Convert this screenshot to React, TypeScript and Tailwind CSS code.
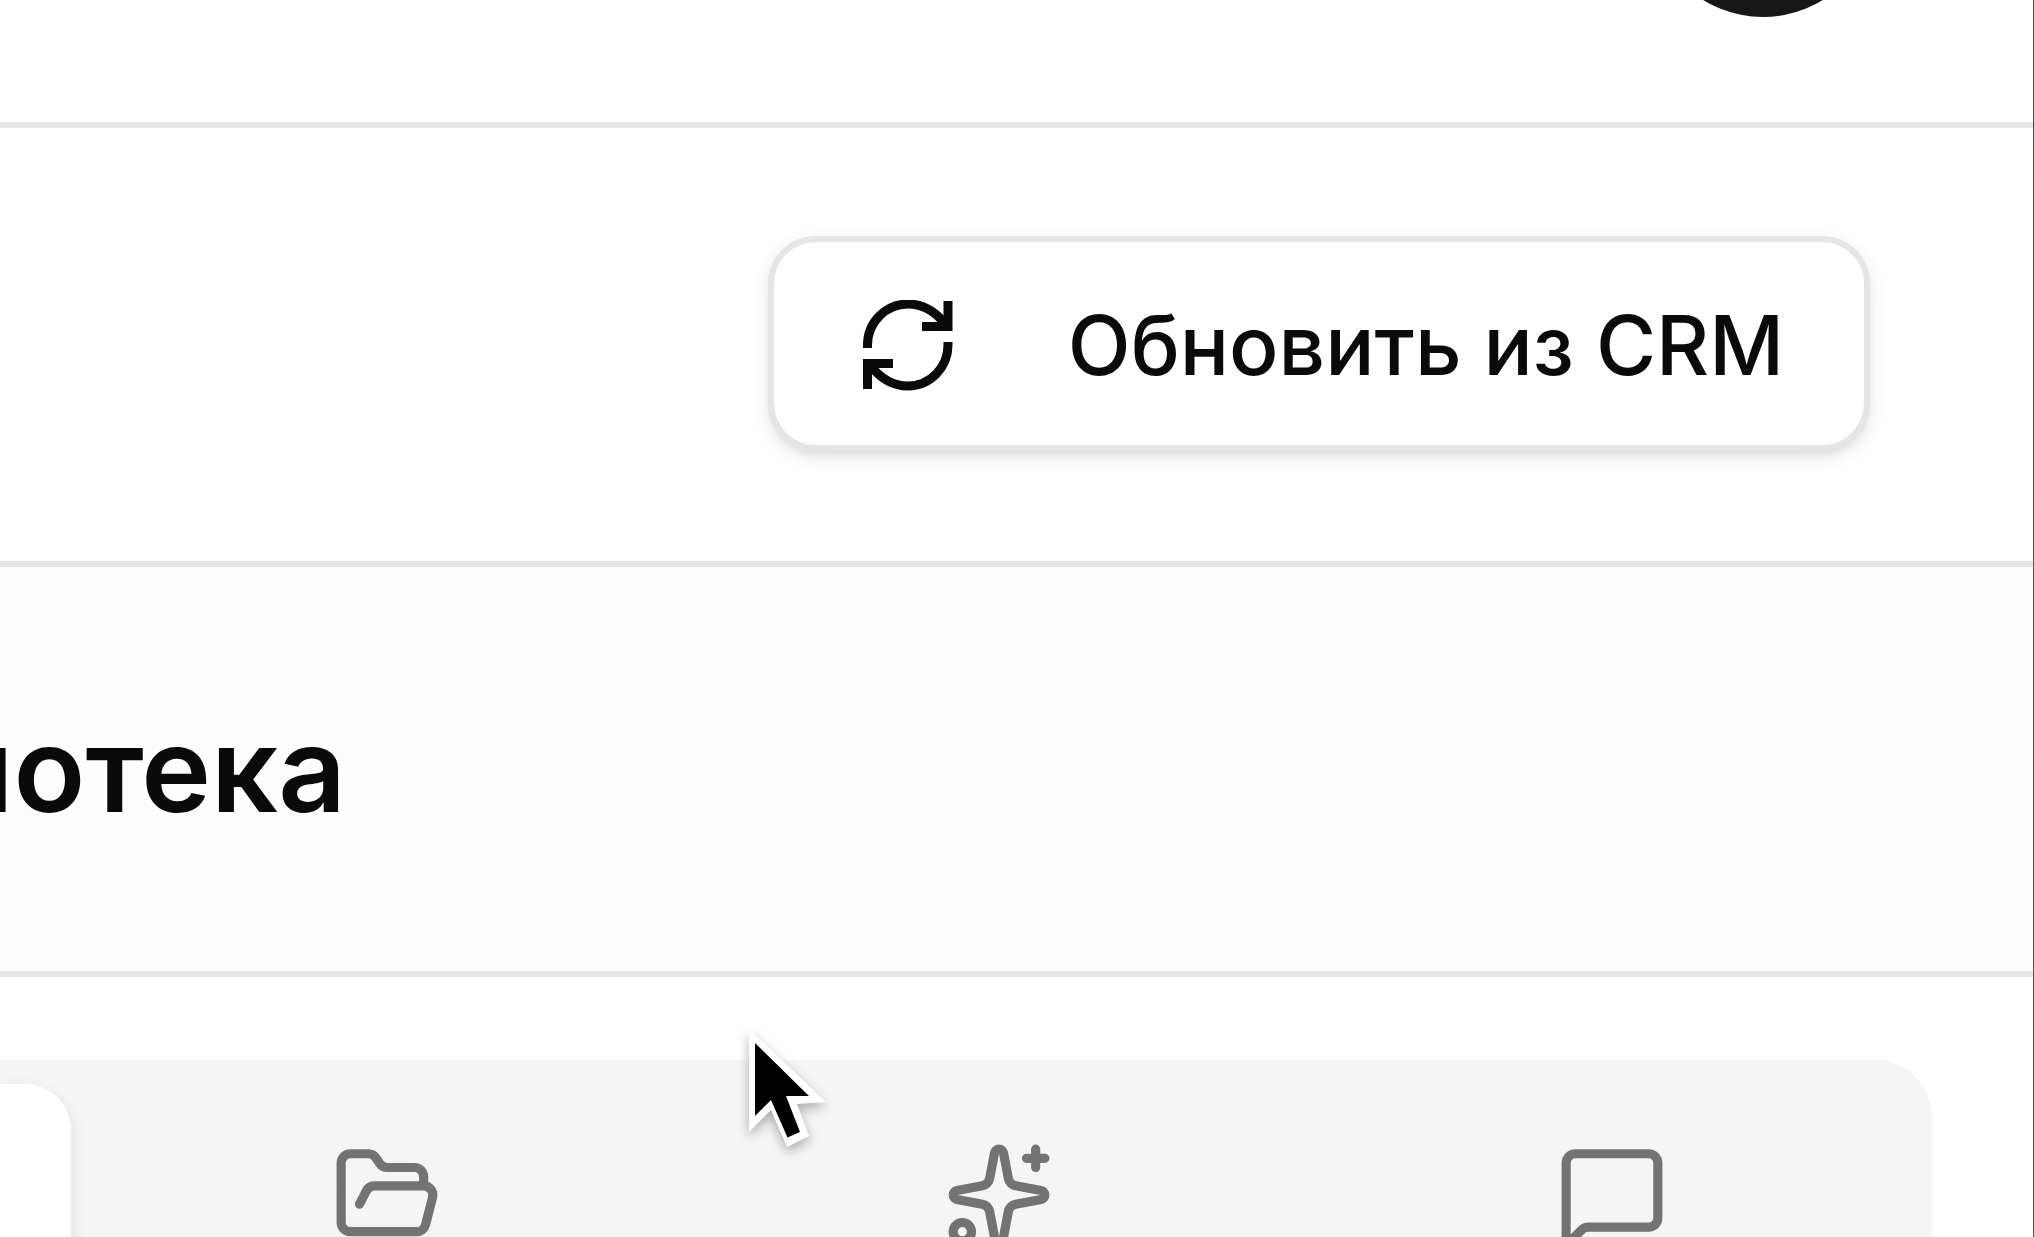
import { FolderOpen, MessageSquare, Sparkles } from "lucide-react";

const tabs = [
  { label: "Файлы", icon: FolderOpen },
  { label: "Ассистент", icon: Sparkles },
  { label: "Сообщения", icon: MessageSquare },
];

function RefreshIcon() {
  return (
    <svg viewBox="0 0 92 92" className="size-[92px] shrink-0" fill="none" stroke="currentColor" strokeWidth="9" aria-hidden="true">
      <path d="M5.5 48V45A40.5 41 0 0 1 46 4C62 4 74 12 84 25" />
      <path d="M86 1V26.5H60" />
      <path d="M86 42V45A40.5 41 0 0 1 46 86C30 86 18 78 8 65" />
      <path d="M5.5 89V63.5H31" />
    </svg>
  );
}

function Cursor() {
  return (
    <svg
      viewBox="0 0 90 130"
      className="pointer-events-none absolute left-[740px] top-[1020px] h-[130px] w-[90px] overflow-visible drop-shadow-[0_5px_6px_rgba(0,0,0,0.3)]"
      aria-hidden="true"
    >
      <path d="M9 9L86 82L57 84L69 116L47 127L31 90L9 112Z" fill="#fff" />
      <path d="M15 23L69 76H46L60 112L47.5 117.5L31 80L15 96Z" fill="#000" />
    </svg>
  );
}

export default function App() {
  return (
    <div className="relative flex h-screen overflow-hidden bg-white font-['Inter',sans-serif] text-neutral-950">
      <div className="min-w-0 flex-1">
        <header className="flex h-32 items-end justify-end border-b-6 border-[#e5e5e5] pr-[156px] pb-[105px]">
          <button type="button" aria-label="Профиль" className="size-[228px] shrink-0 rounded-full bg-neutral-900" />
        </header>

        <div className="flex justify-end border-b-6 border-[#e5e5e5] pt-[108px] pr-[163px] pb-[110px]">
          <button
            type="button"
            className="flex h-[215px] items-center gap-[114px] rounded-[48px] border-6 border-[#e5e5e5] bg-white pt-1 pr-20 pl-[88px] text-[82px] font-medium shadow-[0_6px_17px_rgba(0,0,0,0.1),0_6px_11px_-6px_rgba(0,0,0,0.1)]"
          >
            <RefreshIcon />
            Обновить из CRM
          </button>
        </div>

        <div className="flex h-[410px] items-center border-b-6 border-[#e5e5e5] bg-[#fdfdfd]">
          <div className="flex w-[346px] justify-end">
            <h2 className="text-[118px] leading-none font-semibold">Библиотека</h2>
          </div>
        </div>

        <main className="pt-[83px] pr-[101px]">
          <div role="tablist" className="flex h-[270px] rounded-r-[57px] bg-neutral-100 py-6 pr-6">
            <button
              type="button"
              role="tab"
              aria-selected="true"
              aria-label="Обзор"
              className="w-[71px] rounded-r-[46px] bg-white shadow-[0_6px_17px_rgba(0,0,0,0.1)]"
            />
            {tabs.map((tab) => (
              <button
                key={tab.label}
                type="button"
                role="tab"
                aria-selected="false"
                aria-label={tab.label}
                className="flex flex-1 items-center justify-center pl-5 text-neutral-500"
              >
                <tab.icon className="size-[110px]" />
              </button>
            ))}
          </div>
        </main>
      </div>

      <div className="w-px bg-linear-to-b from-[#475060] from-10% to-[#6b504a] to-20%" />

      <Cursor />
    </div>
  );
}
